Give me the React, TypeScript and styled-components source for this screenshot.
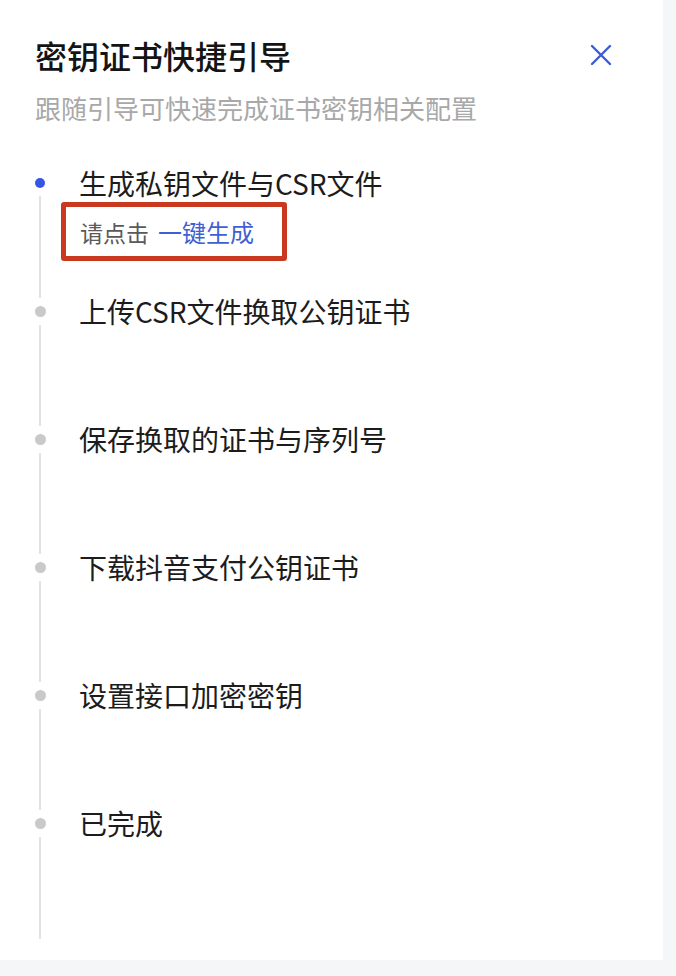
import React from 'react'
import styled, { createGlobalStyle } from 'styled-components'

const GlobalStyle = createGlobalStyle`
  html, body {
    margin: 0;
    padding: 0;
    background: #f5f6f8;
  }
  body {
    font-family: "Noto Sans CJK SC", "Noto Sans", sans-serif;
  }
`

const Card = styled.div`
  width: 663px;
  height: 960px;
  background: #ffffff;
  box-sizing: border-box;
  padding-top: 33px;
`

const Header = styled.div`
  display: flex;
  align-items: center;
  justify-content: space-between;
  padding: 0 51px 0 35px;
`

const Title = styled.h1`
  margin: 0;
  font-size: 32px;
  line-height: 44px;
  font-weight: 500;
  color: #141414;
`

const CloseButton = styled.button`
  display: flex;
  border: 0;
  padding: 0;
  background: none;
  cursor: pointer;
`

const Subtitle = styled.p`
  margin: 13px 0 0;
  padding-left: 35px;
  font-size: 26px;
  line-height: 36px;
  color: #a8a8a8;
`

const Steps = styled.ol`
  list-style: none;
  margin: 39px 0 0;
  padding: 0;
`

const Step = styled.li<{ $last?: boolean }>`
  display: flex;
  height: ${(p) => (p.$last ? 129 : 128)}px;
`

const Rail = styled.div`
  width: 80px;
  flex: none;
  display: flex;
  flex-direction: column;
  align-items: center;
`

const Dot = styled.span<{ $active?: boolean }>`
  width: ${(p) => (p.$active ? 10 : 11)}px;
  height: ${(p) => (p.$active ? 10 : 11)}px;
  margin-top: ${(p) => (p.$active ? 13 : 12.5)}px;
  border-radius: 50%;
  background: ${(p) => (p.$active ? '#3556e3' : '#c9c9cb')};
`

const Line = styled.span`
  flex: 1;
  width: 2px;
  margin: 8px 0 -5px;
  background: #e2e2e4;
`

const Content = styled.div`
  margin-left: -1px;
`

const StepLabel = styled.div`
  font-size: 28px;
  line-height: 36px;
  color: #1c1c1c;
`

const Hint = styled.div`
  display: flex;
  align-items: center;
  width: 226px;
  height: 59px;
  box-sizing: border-box;
  margin: 1px 0 0 -18px;
  padding-left: 14px;
  border: 5px solid #c9391f;
  border-radius: 3px;
  font-size: 23px;
  color: #5a5a5a;
  gap: 9px;
`

const Action = styled.a`
  font-size: 24px;
  color: #3f5fd4;
  text-decoration: none;
  cursor: pointer;
`

const steps = [
  '生成私钥文件与CSR文件',
  '上传CSR文件换取公钥证书',
  '保存换取的证书与序列号',
  '下载抖音支付公钥证书',
  '设置接口加密密钥',
  '已完成',
]

const App: React.FC = () => (
  <>
    <GlobalStyle />
    <Card>
      <Header>
        <Title>密钥证书快捷引导</Title>
        <CloseButton aria-label="关闭">
          <svg width="22" height="22" viewBox="0 0 22 22">
            <path
              d="M2 2L20 20M20 2L2 20"
              stroke="#3d5bd6"
              strokeWidth="2.4"
              strokeLinecap="round"
            />
          </svg>
        </CloseButton>
      </Header>
      <Subtitle>跟随引导可快速完成证书密钥相关配置</Subtitle>
      <Steps>
        {steps.map((label, i) => (
          <Step key={label} $last={i === steps.length - 1}>
            <Rail>
              <Dot $active={i === 0} />
              <Line />
            </Rail>
            <Content>
              <StepLabel>{label}</StepLabel>
              {i === 0 && (
                <Hint>
                  <span>请点击</span>
                  <Action>一键生成</Action>
                </Hint>
              )}
            </Content>
          </Step>
        ))}
      </Steps>
    </Card>
  </>
)

export default App
